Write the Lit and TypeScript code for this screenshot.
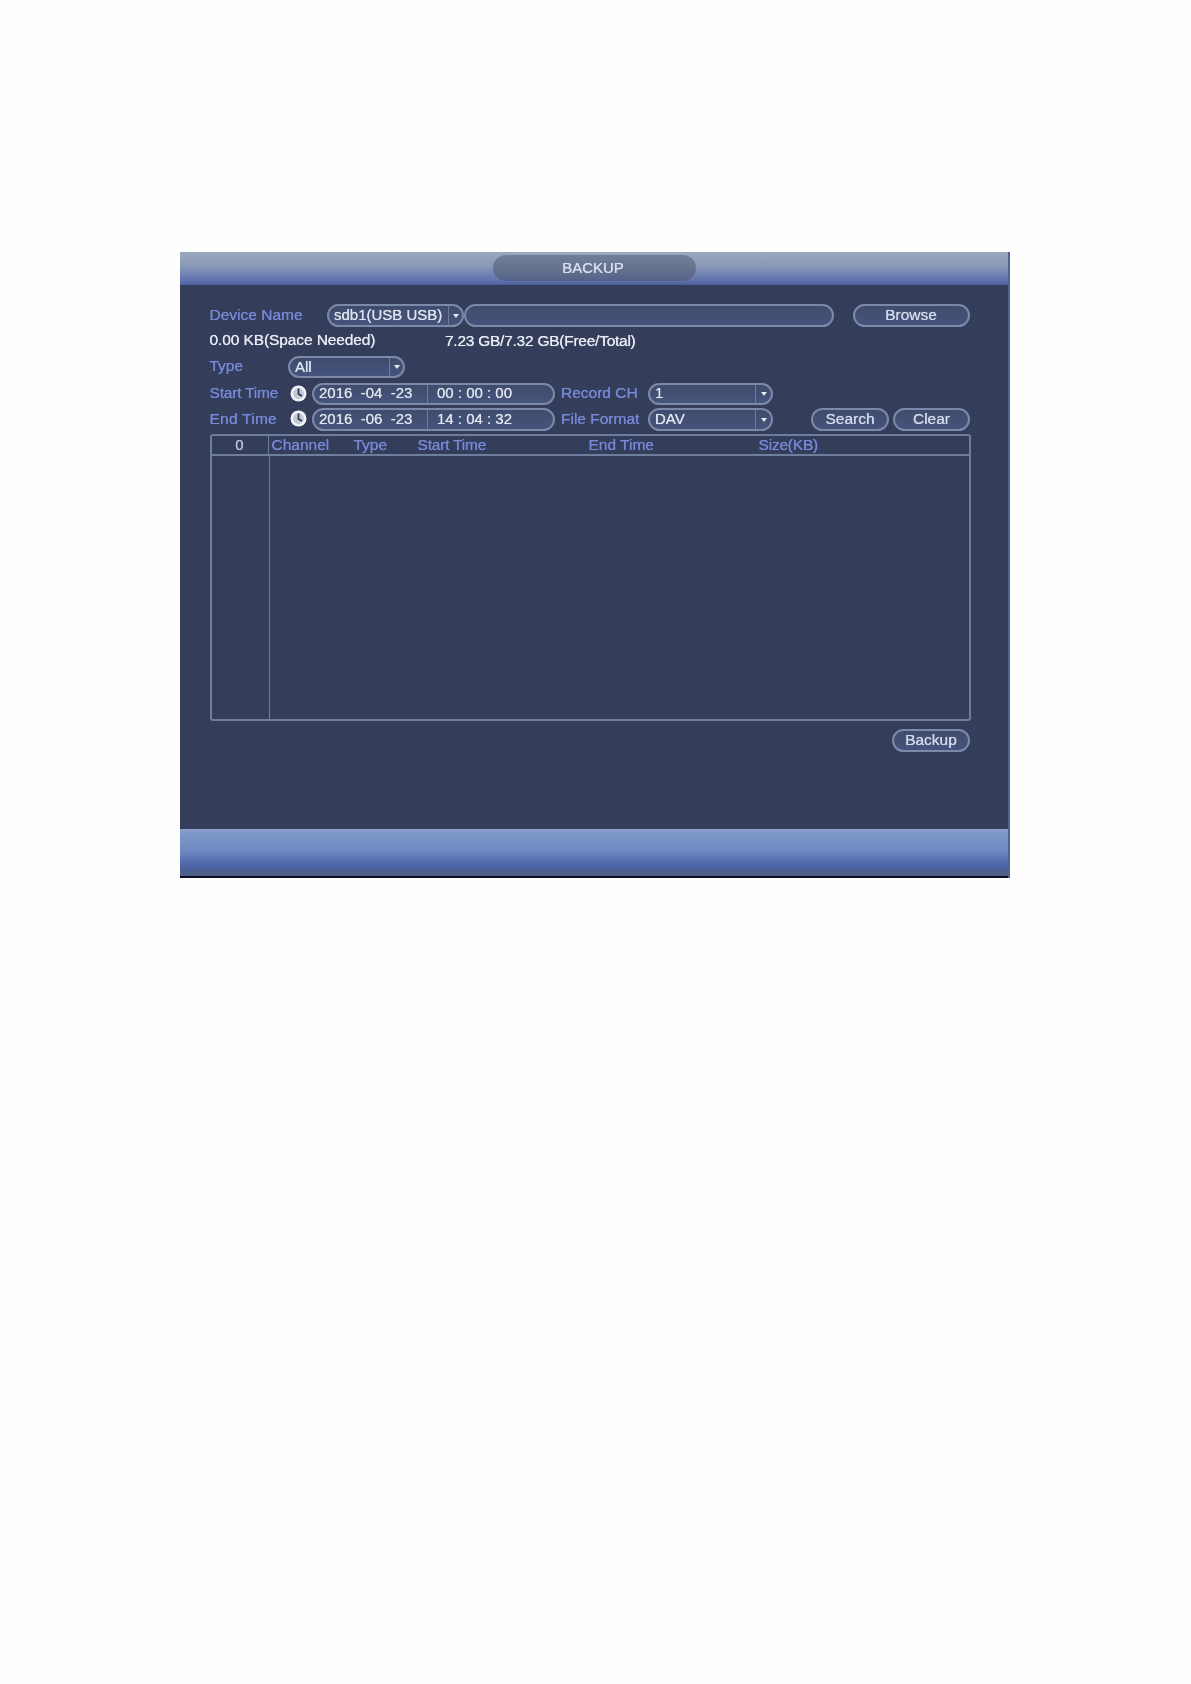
import { LitElement, html, css } from "lit";
import { customElement } from "lit/decorators.js";

const COLS = [
  { name: "Channel", tight: false },
  { name: "Type", tight: false },
  { name: "Start Time", tight: true },
  { name: "End Time", tight: false },
  { name: "Size(KB)", tight: true },
];

@customElement("app-root")
export class AppRoot extends LitElement {
  static styles = css`
    :host {
      display: block;
      min-height: 1684px;
      box-sizing: border-box;
      padding: 252px 0 0 180px;
      background: #fefefe;
      font-family: "Liberation Sans", Arial, sans-serif;
      font-size: 15.5px;
      color: #e8ebf4;
    }
    .panel {
      width: 830px;
      height: 626px;
      display: flex;
      flex-direction: column;
      box-sizing: border-box;
      background: #343d5a;
      border-right: 2px solid #52628a;
      filter: blur(0.7px);
      text-shadow: 0 0 0.7px currentColor;
    }
    .head {
      height: 33px;
      flex: none;
      box-sizing: border-box;
      padding-top: 3px;
      display: flex;
      justify-content: center;
      background: linear-gradient(#9aa8be 0%, #8797b6 45%, #5b6fae 90%, #4a5d95 100%);
    }
    .title {
      width: 203px;
      height: 26px;
      border-radius: 13px;
      box-sizing: border-box;
      padding: 0 2px 2px 0;
      background: linear-gradient(#727e98 0%, #66738f 50%, #536289 100%);
      display: flex;
      align-items: center;
      justify-content: center;
      font-size: 15px;
      color: #d9deea;
    }
    .body {
      flex: 1;
      box-sizing: border-box;
      padding: 19px 0 0 29.5px;
      display: flex;
      flex-direction: column;
    }
    .foot {
      height: 49px;
      flex: none;
      box-sizing: border-box;
      background: linear-gradient(#8da2c9 0%, #7e98c8 8%, #6f8ac2 45%, #4c65aa 78%, #4a6098 86%, #4f6084 97%);
      border-bottom: 2px solid #0a0a24;
    }
    .row {
      display: flex;
      align-items: center;
    }
    .r-device { height: 23px; }
    .r-info { height: 20px; margin-top: 3px; }
    .r-type { height: 22px; margin-top: 6px; }
    .r-start { height: 22px; margin-top: 5px; }
    .r-end { height: 23px; margin-top: 3px; }
    .r-action { height: 23px; margin-top: 8px; width: 760.5px; justify-content: flex-end; }
    .label { color: #7688d6; flex: none; margin-bottom: 2px; }
    .w117 { width: 117.5px; }
    .w78 { width: 78.5px; }
    .w87 { width: 87px; margin-left: 6px; }
    .tight { letter-spacing: -0.2px; }
    .loose { letter-spacing: 0.25px; }
    .used { width: 235.5px; flex: none; letter-spacing: -0.1px; }
    .free { letter-spacing: -0.25px; margin-top: 2px; }
    .pill {
      box-sizing: border-box;
      height: 100%;
      flex: none;
      border: 2px solid #7d89a8;
      border-radius: 12px;
      background: linear-gradient(#404c6c, #45547c);
      display: flex;
      align-items: center;
      color: #e0e4ef;
    }
    .select { padding-left: 5px; font-size: 15px; }
    .select .val { flex: 1; white-space: nowrap; margin-bottom: 2px; }
    .r-start .select .val { margin-bottom: 3px; }
    .arrow {
      flex: none;
      align-self: stretch;
      width: 13px;
      border-left: 1px solid #6f7b9b;
      display: flex;
      align-items: center;
      justify-content: center;
    }
    .arrow i {
      width: 0;
      height: 0;
      border-left: 3px solid transparent;
      border-right: 3px solid transparent;
      border-top: 4px solid #e6e9f2;
    }
    .s-device { width: 137px; }
    .s-type { width: 117px; }
    .s-wide { width: 125px; }
    .s-wide .arrow { width: 15px; }
    .input { width: 369.5px; margin-right: 19px; }
    .btn { justify-content: center; color: #d5daea; padding-bottom: 2px; }
    .w-browse { width: 117px; }
    .w-btn { width: 77px; }
    .w-backup { width: 78px; }
    .search { width: 78px; margin-left: 38px; margin-right: 4px; }
    .clock { flex: none; width: 17px; height: 17px; margin: 0 5.5px 2px 1.5px; }
    .time { width: 243px; font-size: 15px; }
    .time span { white-space: pre; }
    .date {
      width: 114px;
      padding: 0 0 2px 5px;
      box-sizing: border-box;
      flex: none;
      border-right: 1px solid #6f7b9b;
      align-self: stretch;
      display: flex;
      align-items: center;
    }
    .hms { padding-left: 9px; margin-bottom: 2px; }
    .r-start .date { padding-bottom: 3px; }
    .r-start .hms { margin-bottom: 3px; }
    .table {
      box-sizing: border-box;
      width: 761px;
      height: 287px;
      margin-top: 3px;
      border: 2px solid #707e9e;
      border-radius: 3px;
      display: flex;
      flex-direction: column;
    }
    .t-head {
      height: 18px;
      flex: none;
      display: grid;
      grid-template-columns: 57px 82px 64px 171px 170px 1fr;
      align-items: center;
      border-bottom: 2px solid #707e9e;
      color: #7688d6;
    }
    .t-head .idx { text-align: center; color: #b9c2de; align-self: stretch; font-size: 15px; line-height: 18px; border-right: 1px solid #707e9e; }
    .t-head .col { padding-left: 3px; white-space: nowrap; margin-bottom: 2px; }
    .t-body { flex: 1; display: flex; }
    .t-body .rail { width: 57px; border-right: 1px solid #707e9e; }
  `;

  private select(value: string, cls: string) {
    return html`<div class="pill select ${cls}">
      <span class="val">${value}</span>
      <span class="arrow"><i></i></span>
    </div>`;
  }

  private clock() {
    return html`<svg class="clock" viewBox="0 0 17 17">
      <circle cx="8.5" cy="8.5" r="8" fill="#f0f2f6" />
      <circle cx="8.5" cy="8.5" r="5.4" fill="#c4c8d4" />
      <path d="M8.5 3.5V9L12 11" fill="none" stroke="#2f3753" stroke-width="1.7" />
    </svg>`;
  }

  private time(date: string, hms: string) {
    return html`<div class="pill time">
      <span class="date">${date}</span>
      <span class="hms">${hms}</span>
    </div>`;
  }

  render() {
    return html`
      <div class="panel">
        <div class="head"><div class="title">BACKUP</div></div>
        <div class="body">
          <div class="row r-device">
            <span class="label w117">Device Name</span>
            ${this.select("sdb1(USB USB)", "s-device")}
            <div class="pill input"></div>
            <div class="pill btn w-browse">Browse</div>
          </div>
          <div class="row r-info">
            <span class="used">0.00 KB(Space Needed)</span>
            <span class="free">7.23 GB/7.32 GB(Free/Total)</span>
          </div>
          <div class="row r-type">
            <span class="label w78">Type</span>
            ${this.select("All", "s-type")}
          </div>
          <div class="row r-start">
            <span class="label w78 tight">Start Time</span>
            ${this.clock()}
            ${this.time("2016  -04  -23", "00 : 00 : 00")}
            <span class="label w87">Record CH</span>
            ${this.select("1", "s-wide")}
          </div>
          <div class="row r-end">
            <span class="label w78 loose">End Time</span>
            ${this.clock()}
            ${this.time("2016  -06  -23", "14 : 04 : 32")}
            <span class="label w87">File Format</span>
            ${this.select("DAV", "s-wide")}
            <div class="pill btn search">Search</div>
            <div class="pill btn w-btn">Clear</div>
          </div>
          <div class="table">
            <div class="t-head">
              <span class="idx">0</span>
              ${COLS.map((c) => html`<span class="col ${c.tight ? "tight" : ""}">${c.name}</span>`)}
            </div>
            <div class="t-body"><div class="rail"></div></div>
          </div>
          <div class="row r-action">
            <div class="pill btn w-backup">Backup</div>
          </div>
        </div>
        <div class="foot"></div>
      </div>
    `;
  }
}
